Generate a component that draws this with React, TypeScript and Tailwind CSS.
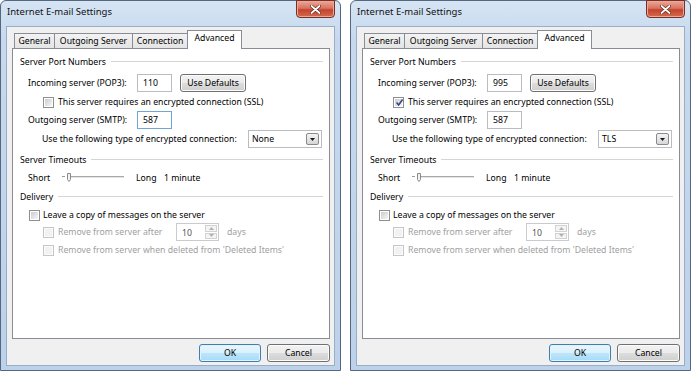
import React from "react";

function Check({ checked = false, disabled = false }: { checked?: boolean; disabled?: boolean }) {
  return (
    <span
      className={
        "relative flex h-[11px] w-[11px] shrink-0 items-center justify-center border " +
        (disabled ? "border-[#c6c6c6] bg-[#fbfbfb]" : "border-[#8e8f8f] bg-white")
      }
    >
      <span
        className={
          "h-[7px] w-[7px] " +
          (disabled ? "bg-[#f2f2f2]" : "bg-[linear-gradient(135deg,#c9ccd2,#f6f6f6)]")
        }
      />
      {checked && (
        <svg className="absolute left-[1px] top-[0px]" width="9" height="9" viewBox="0 0 9 9">
          <path d="M1.6 4.6 L3.6 7 L7.6 1.6" stroke="#34477a" strokeWidth="1.6" fill="none" />
        </svg>
      )}
    </span>
  );
}

function Btn({ children, def = false, w }: { children: React.ReactNode; def?: boolean; w: string }) {
  return (
    <div
      className={
        "flex h-[18px] items-center justify-center rounded-[3px] border " +
        w +
        " " +
        (def
          ? "border-[#3c7fb1] bg-[linear-gradient(to_bottom,#eaf6fd_0%,#d9f0fc_50%,#bee6fd_50%,#a7d9f5_100%)] shadow-[inset_0_0_0_1px_#e4f3fb]"
          : "border-[#707070] bg-[linear-gradient(to_bottom,#f2f2f2_0%,#ebebeb_50%,#dddddd_50%,#cfcfcf_100%)] shadow-[inset_0_0_0_1px_#fcfcfc]")
      }
    >
      {children}
    </div>
  );
}

function Section({ title }: { title: string }) {
  return (
    <div className="flex h-[14px] items-center pl-[7px] pr-[6px]">
      <span>{title}</span>
      <span className="ml-[5px] h-[2px] flex-1 border-t border-b border-t-[#d5d5d5] border-b-white" />
    </div>
  );
}

function Input({ value, focused = false }: { value: string; focused?: boolean }) {
  return (
    <div
      className={
        "flex h-[18px] w-[35px] items-center border bg-white pl-[5px] " +
        (focused ? "border-[#6ea6d8]" : "border-[#b9bcc3]")
      }
    >
      {value}
    </div>
  );
}

function Dialog({ pop, ssl, enc, smtpFocused }: { pop: string; ssl: boolean; enc: string; smtpFocused: boolean }) {
  return (
    <div className="flex h-[371px] w-[341px] shrink-0 flex-col rounded-t-[6px] border border-[#55667e] bg-[linear-gradient(to_bottom,#d6e5f4_0%,#c6d9ee_10%,#bcd2ea_100%)] px-[5px] pb-[4px]">
      <div className="flex h-[25px] shrink-0 items-start justify-between pr-[0px]">
        <span className="pl-[1px] pt-[5px] text-[9.5px] leading-[12px] text-[#111]">Internet E-mail Settings</span>
        <div className="-mt-px flex h-[18px] w-[39px] items-center justify-center rounded-b-[4px] border border-[#7a2f24] bg-[linear-gradient(to_bottom,#e9a99c_0%,#d9735f_45%,#c5442d_55%,#d26a4f_100%)] shadow-[inset_0_0_0_1px_#eba898]">
          <svg width="11" height="9" viewBox="0 0 11 9">
            <path d="M1.5 1 L9.5 8 M9.5 1 L1.5 8" stroke="#5a1f16" strokeWidth="3" strokeLinecap="round" />
            <path d="M1.5 1 L9.5 8 M9.5 1 L1.5 8" stroke="#ffffff" strokeWidth="1.8" strokeLinecap="round" />
          </svg>
        </div>
      </div>
      <div className="flex flex-1 flex-col border border-[#9aadc4] bg-[#f0f0f0] pl-[5px] pr-[4px] pt-[4px]">
        <div className="flex h-[17px] items-end pl-[2px]">
          <div className="flex h-[15px] w-[41px] items-center justify-center border border-b-0 border-[#898c95] bg-[linear-gradient(to_bottom,#f3f3f3,#e4e4e4)]">General</div>
          <div className="-ml-px flex h-[15px] w-[79px] items-center justify-center border border-b-0 border-[#898c95] bg-[linear-gradient(to_bottom,#f3f3f3,#e4e4e4)]">Outgoing Server</div>
          <div className="-ml-px flex h-[15px] w-[56px] items-center justify-center border border-b-0 border-[#898c95] bg-[linear-gradient(to_bottom,#f3f3f3,#e4e4e4)]">Connection</div>
          <div className="relative z-10 -mb-px -ml-px flex h-[19px] w-[55px] items-start justify-center border border-b-0 border-[#898c95] bg-white pt-[1px]">Advanced</div>
        </div>
        <div className="flex h-[291px] flex-col border border-[#898c95] bg-white pt-[6px]">
          <Section title="Server Port Numbers" />
          <div className="mt-[5px] flex h-[18px] items-center pl-[15px]">
            <span className="w-[109px]">Incoming server (POP3):</span>
            <Input value={pop} />
            <div className="ml-[8px]">
              <Btn w="w-[66px]">Use Defaults</Btn>
            </div>
          </div>
          <div className="mt-[3px] flex h-[14px] items-center pl-[30px]">
            <Check checked={ssl} />
            <span className="ml-[4px]">This server requires an encrypted connection (SSL)</span>
          </div>
          <div className="mt-[2px] flex h-[18px] items-center pl-[15px]">
            <span className="w-[109px]">Outgoing server (SMTP):</span>
            <Input value="587" focused={smtpFocused} />
          </div>
          <div className="mt-[1px] flex h-[18px] items-center pl-[29px]">
            <span className="w-[206px]">Use the following type of encrypted connection:</span>
            <div className="flex h-[18px] w-[74px] items-center justify-between border border-[#b9bcc3] bg-white pl-[3px] pr-[2px]">
              <span>{enc}</span>
              <span className="flex h-[12px] w-[13px] items-center justify-center rounded-[2px] border border-[#8a8a8a] bg-[linear-gradient(to_bottom,#f4f4f4,#d6d6d6)]">
                <svg width="5" height="3" viewBox="0 0 5 3">
                  <path d="M0 0 H5 L2.5 3 Z" fill="#1a1a1a" />
                </svg>
              </span>
            </div>
          </div>
          <div className="mt-[5px]">
            <Section title="Server Timeouts" />
          </div>
          <div className="mt-[4px] flex h-[14px] items-center pl-[15px]">
            <span className="w-[34px]">Short</span>
            <svg width="62" height="12" viewBox="0 0 62 12">
              <path d="M0 4.5 H3" stroke="#9a9a9a" strokeWidth="1" />
              <path d="M9 4.5 H62" stroke="#a8a8a8" strokeWidth="1" />
              <path d="M9 5.5 H62" stroke="#e6e6e6" strokeWidth="1" />
              <path d="M5.5 1.5 H8.5 V7.5 L7 9.5 L5.5 7.5 Z" stroke="#8a8a8a" strokeWidth="1" fill="#f2f2f2" />
            </svg>
            <span className="ml-[12px] w-[28px]">Long</span>
            <span>1 minute</span>
          </div>
          <div className="mt-[5px]">
            <Section title="Delivery" />
          </div>
          <div className="mt-[4px] flex h-[14px] items-center pl-[16px]">
            <Check />
            <span className="ml-[3px]">Leave a copy of messages on the server</span>
          </div>
          <div className="mt-[1px] flex h-[18px] items-center pl-[30px] text-[#a0a0a0]">
            <Check disabled />
            <span className="ml-[4px] w-[118px]">Remove from server after</span>
            <div className="flex h-[18px] w-[43px] border border-[#c9cbd0] bg-white">
              <span className="flex flex-1 items-center pl-[5px] pt-[1px] text-[#555]">10</span>
              <div className="my-[1px] mr-[1px] flex w-[12px] flex-col gap-px">
                <span className="flex flex-1 items-center justify-center border border-[#d2d2d2] bg-[#f4f4f4]">
                  <svg width="5" height="3" viewBox="0 0 5 3">
                    <path d="M0 3 H5 L2.5 0 Z" fill="#b0b0b0" />
                  </svg>
                </span>
                <span className="flex flex-1 items-center justify-center border border-[#d2d2d2] bg-[#f4f4f4]">
                  <svg width="5" height="3" viewBox="0 0 5 3">
                    <path d="M0 0 H5 L2.5 3 Z" fill="#b0b0b0" />
                  </svg>
                </span>
              </div>
            </div>
            <span className="ml-[8px]">days</span>
          </div>
          <div className="mt-[2px] flex h-[14px] items-center pl-[30px] text-[#a0a0a0]">
            <Check disabled />
            <span className="ml-[4px]">Remove from server when deleted from 'Deleted Items'</span>
          </div>
        </div>
        <div className="mt-[5px] flex justify-end gap-[6px]">
          <Btn def w="w-[62px]">OK</Btn>
          <Btn w="w-[63px]">Cancel</Btn>
        </div>
      </div>
    </div>
  );
}

export default function App() {
  return (
    <div className="flex h-[375px] w-[691px] gap-[9px] overflow-hidden bg-white font-['Noto_Sans',sans-serif] text-[8.7px] leading-[12px] text-black">
      <Dialog pop="110" ssl={false} enc="None" smtpFocused={true} />
      <Dialog pop="995" ssl={true} enc="TLS" smtpFocused={false} />
    </div>
  );
}
